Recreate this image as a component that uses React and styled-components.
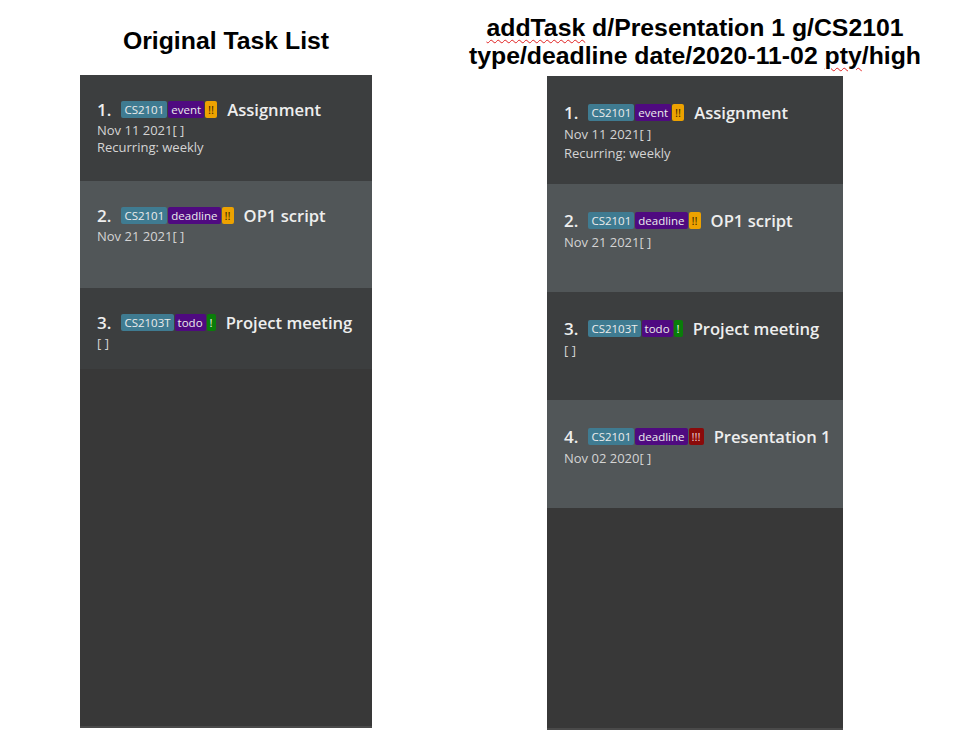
import React from "react";
import styled, { createGlobalStyle } from "styled-components";

const Global = createGlobalStyle`
  html, body {
    margin: 0;
    padding: 0;
    background: #ffffff;
  }
`;

const Page = styled.div`
  display: flex;
  flex-direction: row;
  align-items: flex-start;
  gap: 175px;
  padding-left: 80px;
  width: 976px;
  height: 738px;
  box-sizing: border-box;
  overflow: hidden;
`;

const Column = styled.div`
  display: flex;
  flex-direction: column;
  align-items: center;
  width: ${(p) => p.width}px;
`;

const Title = styled.h2`
  margin: 0;
  height: ${(p) => p.height}px;
  display: flex;
  align-items: center;
  justify-content: center;
  text-align: center;
  white-space: nowrap;
  font-family: "Liberation Sans", Arial, sans-serif;
  font-weight: 700;
  font-size: 24.8px;
  line-height: 28px;
  color: #000000;
  padding-top: ${(p) => p.pad || 0}px;
  box-sizing: border-box;
`;

const Spell = styled.span`
  text-decoration: underline wavy #e02020;
  text-decoration-thickness: 1px;
  text-underline-offset: 3px;
`;

const Panel = styled.div`
  width: 100%;
  height: ${(p) => p.height}px;
  background: #383838;
  border-bottom: 2px solid #4a4a4a;
  box-sizing: border-box;
  display: flex;
  flex-direction: column;
`;

const Cell = styled.div`
  height: ${(p) => p.height}px;
  flex: none;
  background: ${(p) => (p.odd ? "#515658" : "#3c3e3f")};
  padding: ${(p) => p.top}px 0 0 17px;
  box-sizing: border-box;
  font-family: "Open Sans", "Noto Sans", sans-serif;
`;

const Head = styled.div`
  display: flex;
  align-items: center;
  height: 20px;
  margin-bottom: ${(p) => p.gap}px;
`;

const Index = styled.span`
  font-size: 17px;
  font-weight: 600;
  color: #eeeeee;
  margin-right: 10px;
`;

const Tags = styled.span`
  display: flex;
  align-items: center;
  gap: 1px;
  margin-right: 10px;
`;

const Tag = styled.span`
  font-size: 11.5px;
  line-height: 17px;
  height: 17px;
  padding: 0 3px;
  border-radius: 2px;
  color: ${(p) => p.fg || "#ececec"};
  background: ${(p) => p.bg};
`;

const Desc = styled.span`
  font-size: 16.6px;
  font-weight: 600;
  color: #eeeeee;
`;

const Line = styled.div`
  font-size: 13px;
  line-height: ${(p) => p.lh}px;
  color: #d4d4d4;
`;

const typeColor = "#4f0a80";
const moduleColor = "#3f7b91";
const priority = {
  medium: { text: "!!", bg: "#eda200", fg: "#3b2600" },
  low: { text: "!", bg: "#0a7d0a", fg: "#f0f0f0" },
  high: { text: "!!!", bg: "#8a0a0a", fg: "#f0d0d0" },
};

const baseTasks = [
  { mod: "CS2101", type: "event", pty: "medium", desc: "Assignment", date: "Nov 11 2021", recur: "weekly" },
  { mod: "CS2101", type: "deadline", pty: "medium", desc: "OP1 script", date: "Nov 21 2021" },
  { mod: "CS2103T", type: "todo", pty: "low", desc: "Project meeting", date: "" },
];

const newTask = { mod: "CS2101", type: "deadline", pty: "high", desc: "Presentation 1", date: "Nov 02 2020" };

const TaskCard = ({ task, index, height, top, gap, lh }) => {
  const p = priority[task.pty];
  return (
    <Cell odd={index % 2 === 1} height={height} top={top}>
      <Head gap={gap}>
        <Index>{index + 1}.</Index>
        <Tags>
          <Tag bg={moduleColor}>{task.mod}</Tag>
          <Tag bg={typeColor}>{task.type}</Tag>
          <Tag bg={p.bg} fg={p.fg}>{p.text}</Tag>
        </Tags>
        <Desc>{task.desc}</Desc>
      </Head>
      <Line lh={lh}>{task.date}[ ]</Line>
      {task.recur && <Line lh={lh}>Recurring: {task.recur}</Line>}
    </Cell>
  );
};

const App = () => {
  const leftHeights = [106, 107, 81];
  const rightTasks = [...baseTasks, newTask];
  return (
    <>
      <Global />
      <Page>
        <Column width={292}>
          <Title height={75} pad={6}>Original Task List</Title>
          <Panel height={653}>
            {baseTasks.map((t, i) => (
              <TaskCard key={i} task={t} index={i} height={leftHeights[i]} top={24} gap={3} lh={17} />
            ))}
          </Panel>
        </Column>
        <Column width={296}>
          <Title height={76} pad={8}>
            <div>
              <Spell>addTask</Spell> d/Presentation 1 g/CS2101
              <br />
              type/deadline date/2020-11-02 <Spell>pty</Spell>/high
            </div>
          </Title>
          <Panel height={654}>
            {rightTasks.map((t, i) => (
              <TaskCard key={i} task={t} index={i} height={108} top={26} gap={3} lh={19} />
            ))}
          </Panel>
        </Column>
      </Page>
    </>
  );
};

export default App;
